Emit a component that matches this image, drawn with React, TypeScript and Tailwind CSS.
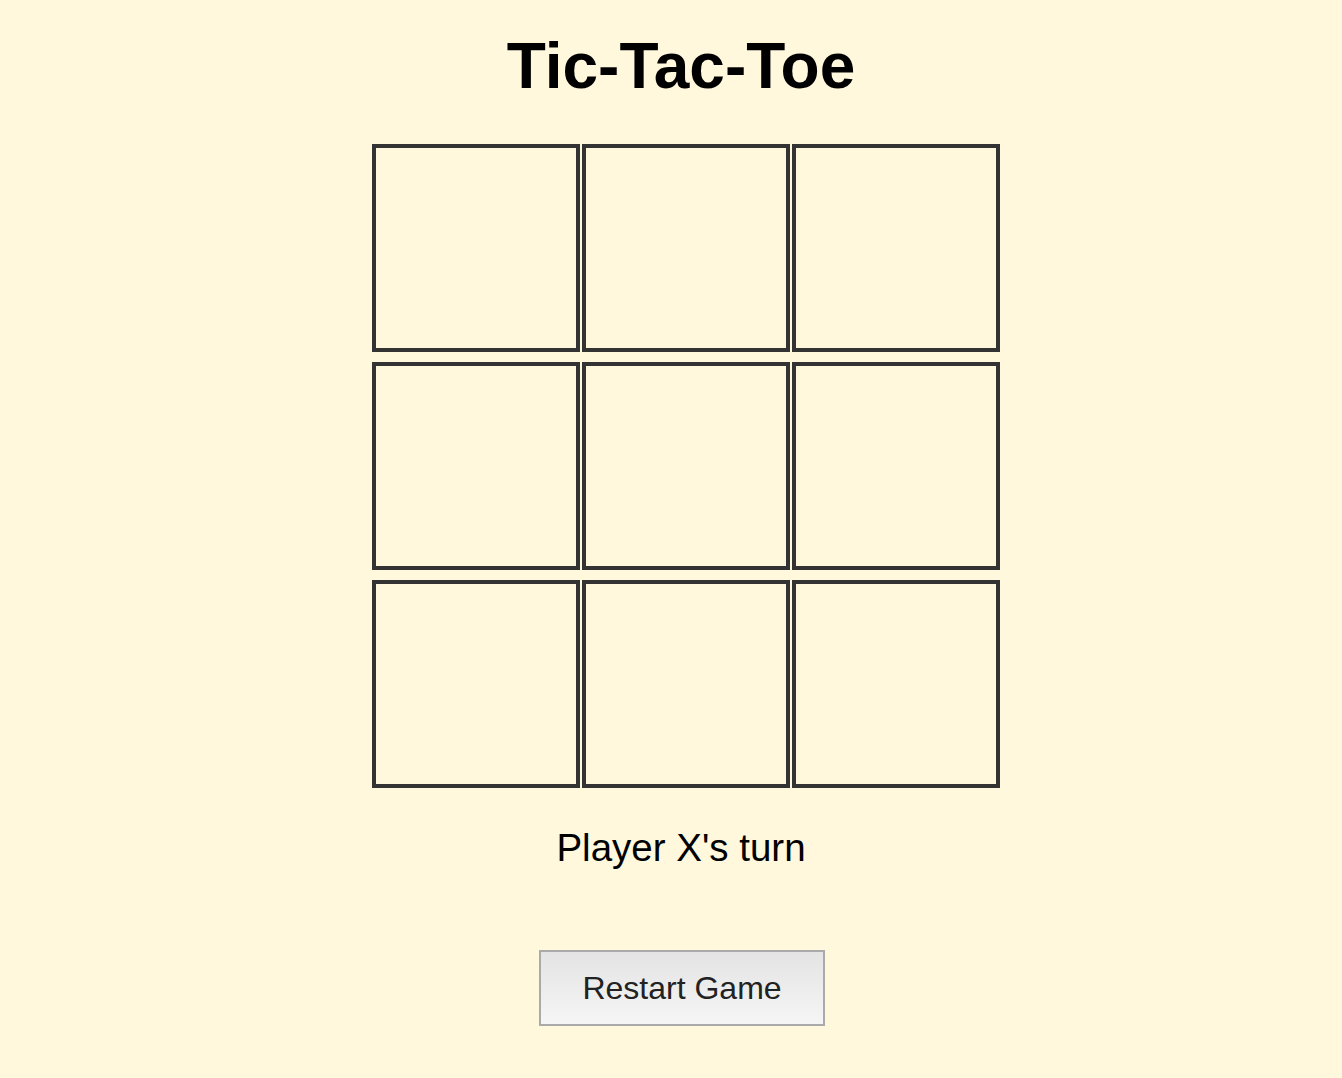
import { useState } from 'react'

type Mark = 'X' | 'O' | null

function App() {
  const [board, setBoard] = useState<Mark[]>(Array(9).fill(null))
  const [turn, setTurn] = useState<'X' | 'O'>('X')

  const play = (i: number) => {
    if (board[i]) return
    const next = board.slice()
    next[i] = turn
    setBoard(next)
    setTurn(turn === 'X' ? 'O' : 'X')
  }

  const restart = () => {
    setBoard(Array(9).fill(null))
    setTurn('X')
  }

  return (
    <div className="min-h-screen bg-[#fff8dc] font-['Liberation_Sans',Arial,sans-serif]">
      <div className="flex flex-col items-center pl-[20px]">
        <h1 className="mt-[34px] text-[64px] leading-[64px] font-bold text-black">Tic-Tac-Toe</h1>

        <div className="ml-[10px] mt-[46px] grid grid-cols-[repeat(3,208px)] gap-x-[2px] gap-y-[10px]">
          {board.map((cell, i) => (
            <button
              key={i}
              onClick={() => play(i)}
              className="h-[208px] w-[208px] border-4 border-[#333333] bg-transparent text-[96px] font-bold text-[#333333]"
            >
              {cell}
            </button>
          ))}
        </div>

        <p className="mt-[41px] text-[38.5px] leading-[38px] text-black">Player {turn}'s turn</p>

        <button
          onClick={restart}
          className="ml-[2px] mt-[83px] flex h-[76px] w-[286px] items-center justify-center border-2 border-[#aaaaaa] bg-gradient-to-b from-[#e4e4e4] to-[#f5f5f5] text-[32px] text-[#222222]"
        >
          Restart Game
        </button>
      </div>
    </div>
  )
}

export default App
